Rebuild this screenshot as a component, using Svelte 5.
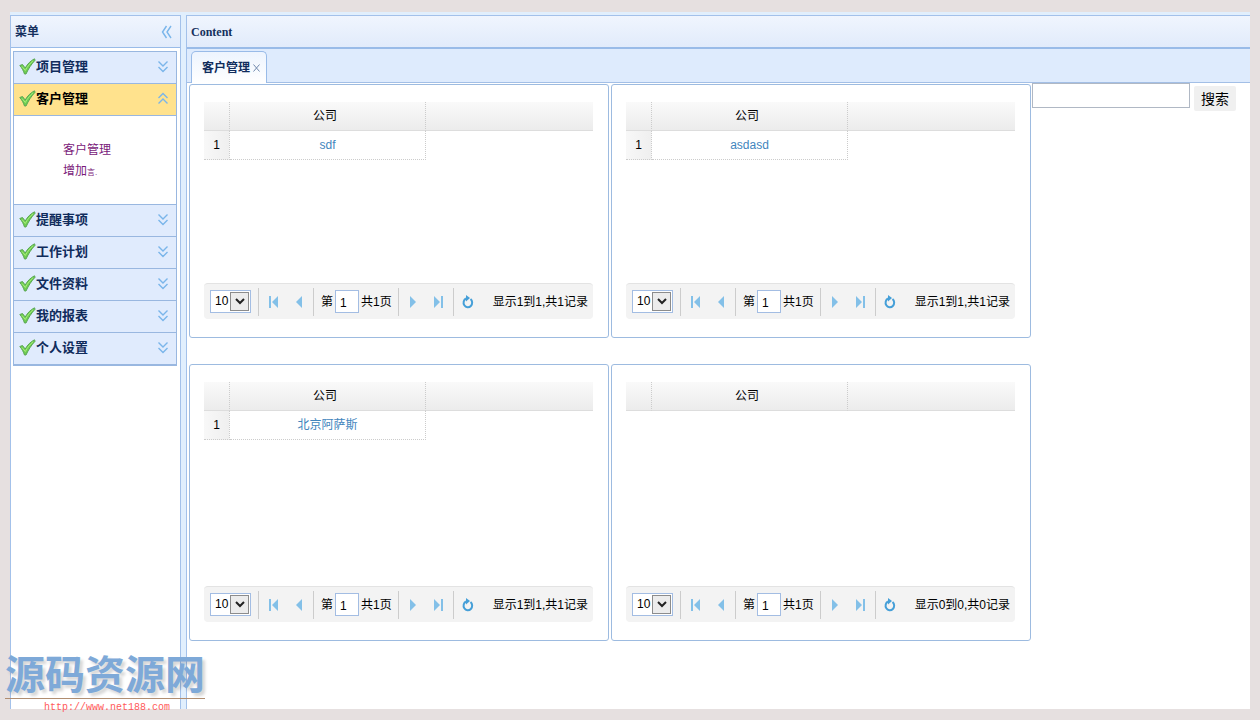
<script lang="ts">
  type Section = { title: string; links?: string[] };
  type Grid = { id: string; rows: string[]; info: string };

  const sections: Section[] = [
    { title: '项目管理' },
    { title: '客户管理', links: ['客户管理', '增加'] },
    { title: '提醒事项' },
    { title: '工作计划' },
    { title: '文件资料' },
    { title: '我的报表' },
    { title: '个人设置' }
  ];

  const grids: Grid[] = [
    { id: 'g1', rows: ['sdf'], info: '显示1到1,共1记录' },
    { id: 'g2', rows: ['asdasd'], info: '显示1到1,共1记录' },
    { id: 'g3', rows: ['北京阿萨斯'], info: '显示1到1,共1记录' },
    { id: 'g4', rows: [], info: '显示0到0,共0记录' }
  ];

  let open = $state(1);
  let keyword = $state('');
</script>

<div class="page">
  <div class="layout">
    <aside class="panel west">
      <header class="panel-header">
        <span>菜单</span>
        <button class="icon-btn" aria-label="收起菜单">
          <svg width="12" height="14" viewBox="0 0 12 14"><path d="M6.500 1 2.500 7l4 6M11 1 7 7l4 6" /></svg>
        </button>
      </header>
      <nav class="accordion">
        {#each sections as section, i}
          <button class="acc-header" class:selected={open === i} onclick={() => (open = i)}>
            <svg class="check" width="17" height="18" viewBox="0 0 17 18">
              <path d="M.8 7.500 3.500 6.500l2.700 3.500C8.500 6 11.500 2.800 15.500.8l.6 1.400C12.500 6 9.500 10.500 7 16H5.500C4.500 13 3 10 .8 7.500z" />
              <path class="shine" d="M3 8.500 6.300 12.500C8.300 8.500 11 5.500 14 2.800" />
            </svg>
            <span class="acc-title">{section.title}</span>
            <svg class="arrow" width="12" height="13" viewBox="0 0 12 13">
              {#if open === i}
                <path d="M1.500 6 6 1.500 10.500 6M1.500 11.500 6 7l4.500 4.500" />
              {:else}
                <path d="M1.500 1.500 6 6l4.500-4.500M1.500 7 6 11.500 10.500 7" />
              {/if}
            </svg>
          </button>
          {#if open === i}
            <div class="acc-body">
              {#each section.links ?? [] as link, n}
                <a href="#{i}-{n}">{link}{#if n === 1}<small>言.</small>{/if}</a>
              {/each}
            </div>
          {/if}
        {/each}
      </nav>
    </aside>

    <main class="panel center">
      <header class="panel-header">
        <span>Content</span>
      </header>
      <div class="tabs">
        <div class="tab">
          <button class="tab-title">客户管理</button>
          <button class="tab-close" aria-label="关闭">
            <svg width="7" height="8" viewBox="0 0 7 8"><path d="m.5.5 6 7m0-7-6 7" /></svg>
          </button>
        </div>
      </div>
      <div class="content">
        <div class="grids">
          {#each grids as grid (grid.id)}
            <section class="box">
              <div class="view">
                <table>
                  <thead>
                    <tr><th class="num"></th><th class="company">公司</th><th></th></tr>
                  </thead>
                  <tbody>
                    {#each grid.rows as row, n}
                      <tr>
                        <td class="num">{n + 1}</td>
                        <td class="company"><a href="#{grid.id}">{row}</a></td>
                        <td></td>
                      </tr>
                    {/each}
                  </tbody>
                </table>
              </div>
              <div class="pager">
                <div class="page-size">
                  <select aria-label="每页记录数">
                    <option>10</option>
                    <option>20</option>
                    <option>50</option>
                  </select>
                  <span class="drop">
                    <svg width="10" height="7" viewBox="0 0 10 7"><path d="m1 1 4 4 4-4" /></svg>
                  </span>
                </div>
                <i class="sep"></i>
                <button class="page-btn" aria-label="首页">
                  <svg width="10" height="12" viewBox="0 0 10 12"><path d="M0 0h2v12H0zM9 0v12L3 6z" /></svg>
                </button>
                <button class="page-btn" aria-label="上一页">
                  <svg width="8" height="12" viewBox="0 0 8 12"><path d="M7 0v12L1 6z" /></svg>
                </button>
                <i class="sep"></i>
                <label for="{grid.id}-page">第</label>
                <input id="{grid.id}-page" class="page-num" value="1" />
                <span class="total">共1页</span>
                <i class="sep"></i>
                <button class="page-btn" aria-label="下一页">
                  <svg width="8" height="12" viewBox="0 0 8 12"><path d="M1 0v12l6-6z" /></svg>
                </button>
                <button class="page-btn" aria-label="末页">
                  <svg width="10" height="12" viewBox="0 0 10 12"><path d="M8 0h2v12H8zM1 0v12l6-6z" /></svg>
                </button>
                <i class="sep"></i>
                <button class="page-btn refresh" aria-label="刷新">
                  <svg width="12" height="14" viewBox="0 0 12 14">
                    <path class="ring" d="M8.500 4A4.300 4.600 0 1 1 4 3.500" />
                    <path class="tip" d="M4 0v6.500L8 3z" />
                  </svg>
                </button>
                <span class="info">{grid.info}</span>
              </div>
            </section>
          {/each}
        </div>
        <form class="search" onsubmit={(e) => e.preventDefault()}>
          <input aria-label="搜索" bind:value={keyword} />
          <button>搜索</button>
        </form>
      </div>
    </main>
  </div>

  <div class="site-mark">
    <strong>源码资源网</strong>
    <a href="http://www.net188.com">http://www.net188.com</a>
  </div>
</div>

<style>
  :global(body) {
    margin: 0;
    background: #e6e0e0;
  }

  .page {
    position: relative;
    box-sizing: border-box;
    min-height: 100vh;
    display: flex;
    padding: 12px 10px 11px;
    font: 12px/20px "Liberation Sans", "Noto Sans CJK SC", sans-serif;
    color: #000;
  }

  button,
  input,
  select {
    box-sizing: border-box;
    margin: 0;
    padding: 0;
    border: 0;
    border-radius: 0;
    background: none;
    font: inherit;
    color: inherit;
  }

  a {
    text-decoration: none;
  }

  svg {
    display: block;
    fill: none;
  }

  .layout {
    flex: 1;
    display: flex;
    gap: 5px;
    padding-top: 3px;
    background: #e1effd;
  }

  .panel {
    display: flex;
    flex-direction: column;
    background: #fff;
    border: 1px solid #a3c1ea;
    border-bottom: 0;
  }

  .west {
    flex: none;
    width: 169px;
  }

  .center {
    flex: 1;
    min-width: 0;
    border-right: 0;
  }

  .panel-header {
    display: flex;
    align-items: center;
    justify-content: space-between;
    height: 31px;
    padding: 0 8px 0 4px;
    border-bottom: 1px solid #99bbe8;
    background: linear-gradient(#f0f5fe, #e1ebfb);
    font: bold 12px/20px "Liberation Serif", "Noto Sans CJK SC", serif;
    color: #15305e;
  }

  .center .panel-header {
    border-bottom-width: 2px;
  }

  .icon-btn svg,
  .arrow {
    stroke: #7ab5ea;
    stroke-width: 1.4;
  }

  .accordion {
    display: flex;
    flex-direction: column;
    margin: 3px 3px 0 2px;
    border: 1px solid #99b7e0;
  }

  .acc-header {
    display: flex;
    align-items: center;
    height: 32px;
    padding: 0 7px 2px 5px;
    border-bottom: 1px solid #99b7e0;
    background: #e0ebfd;
    font-size: 13px;
    font-weight: bold;
    color: #102c5c;
  }

  .selected {
    background: #ffe28d;
    color: #000;
  }

  .check {
    fill: #6fce50;
    stroke: #5aa656;
  }

  .check .shine {
    fill: none;
    stroke: #a8ec7c;
  }

  .acc-title {
    flex: 1;
    text-align: left;
  }

  .acc-body {
    display: flex;
    flex-direction: column;
    gap: 1px;
    min-height: 64px;
    padding: 24px 0 0 49px;
    border-bottom: 1px solid #99b7e0;
  }

  .acc-body a {
    color: #7a1a7a;
  }

  .acc-body small {
    font-size: 8px;
  }

  .tabs {
    display: flex;
    align-items: flex-end;
    height: 33px;
    padding-left: 4px;
    border-bottom: 1px solid #a3bfe6;
    background: #deebfd;
  }

  .tab {
    box-sizing: border-box;
    display: flex;
    align-items: center;
    gap: 3px;
    height: 32px;
    padding: 0 6px 0 10px;
    margin-bottom: -1px;
    border: 1px solid #99bbe8;
    border-bottom: 0;
    border-radius: 5px 5px 0 0;
    background: linear-gradient(#edf4fe, #fff);
  }

  .tab-title {
    font-size: 12px;
    font-weight: bold;
    line-height: 20px;
    color: #102c5c;
  }

  .tab-close svg {
    stroke: #7089ad;
  }

  .content {
    flex: 1;
    display: flex;
    align-items: flex-start;
    padding-left: 2px;
  }

  .grids {
    flex: 0 1 842px;
    display: grid;
    grid-template-columns: 1fr 1fr;
    gap: 26px 2px;
    padding-top: 1px;
  }

  .box {
    display: flex;
    flex-direction: column;
    padding: 17px 15px 18px 14px;
    border: 1px solid #9dbbe0;
    border-radius: 3px;
  }

  .view {
    min-height: 181px;
  }

  .box:nth-child(n + 3) .view {
    min-height: 204px;
  }

  table {
    width: 100%;
    table-layout: fixed;
    border-collapse: separate;
    border-spacing: 0;
  }

  th,
  td {
    box-sizing: border-box;
    height: 29px;
    padding: 0;
    text-align: center;
    font-weight: normal;
  }

  th {
    border-bottom: 1px solid #ddd;
    background: linear-gradient(#fafafa, #ececec);
  }

  .num {
    width: 26px;
  }

  .company {
    width: 196px;
  }

  th.company {
    padding-right: 5px;
  }

  .num,
  .company {
    border-right: 1px dotted #ccc;
  }

  td.num,
  td.company {
    border-bottom: 1px dotted #ccc;
  }

  td.num {
    background: linear-gradient(90deg, #f8f8f8, #efefef);
  }

  td a {
    color: #4285bd;
  }

  .pager {
    display: flex;
    align-items: center;
    height: 35px;
    padding: 0 5px 0 6px;
    border-top: 1px solid #e3e3e3;
    border-radius: 4px;
    background: #f3f3f3;
    white-space: nowrap;
  }

  .page-size {
    position: relative;
    margin-right: 5px;
  }

  .page-size select {
    display: block;
    width: 41px;
    height: 23px;
    padding: 0 0 2px 4px;
    border: 1px solid #a3bde3;
    background: #fff;
    appearance: none;
  }

  .drop {
    position: absolute;
    top: 2px;
    right: 2px;
    display: grid;
    place-items: center;
    width: 17px;
    height: 17px;
    border: 1px solid #8c8c8c;
    background: #ececec;
    pointer-events: none;
  }

  .drop svg {
    stroke: #222;
    stroke-width: 2;
  }

  .sep {
    width: 1px;
    height: 28px;
    margin: 0 2px;
    background: #ccc;
  }

  .page-btn {
    display: grid;
    place-items: center;
    width: 25px;
    height: 24px;
  }

  .page-btn svg {
    fill: #83c0e8;
  }

  .refresh .ring {
    fill: none;
    stroke: #459fd8;
    stroke-width: 2;
  }

  .refresh .tip {
    fill: #459fd8;
  }

  .pager label {
    margin: 0 2px 0 5px;
  }

  .page-num {
    width: 24px;
    height: 23px;
    padding: 2px 0 0 4px;
    border: 1px solid #a3bde3;
    background: #fff;
  }

  .total {
    margin: 0 4px 0 2px;
  }

  .info {
    margin-left: auto;
  }

  .search {
    flex: 0 1 204px;
    display: flex;
    gap: 4px;
    padding-left: 1px;
  }

  .search input {
    flex: 0 1 158px;
    min-width: 0;
    height: 25px;
    padding: 0 4px;
    border: 1px solid #b0b8c4;
  }

  .search button {
    width: 42px;
    height: 25px;
    margin-top: 3px;
    border-radius: 2px;
    background: #f0f0f0;
    font-size: 14px;
  }

  .site-mark {
    position: absolute;
    left: 5px;
    bottom: 4px;
    width: 200px;
    display: flex;
    flex-direction: column;
    text-align: center;
  }

  .site-mark strong {
    padding-bottom: 3px;
    border-bottom: 1px solid #b08d70;
    font: bold 40px/46px "Noto Sans CJK SC", sans-serif;
    color: #7ea9d8;
    text-shadow: 3px 3px 3px rgba(0, 0, 0, 0.16);
  }

  .site-mark a {
    padding-left: 4px;
    font: 10px/17px "Liberation Mono", monospace;
    color: #ff5a5a;
  }
</style>
